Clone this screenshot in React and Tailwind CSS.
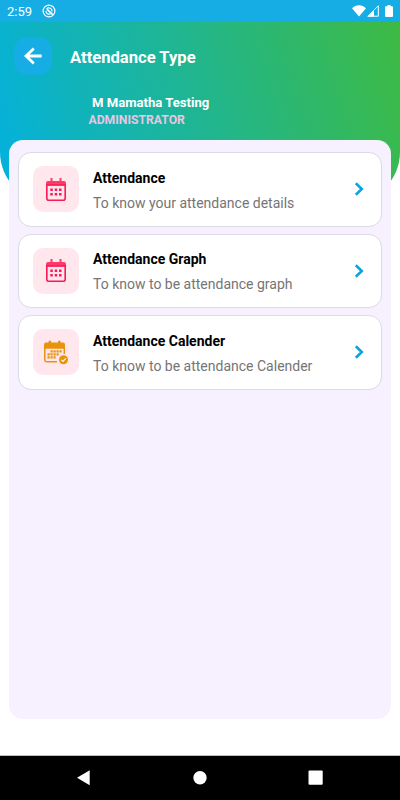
import React from "react";

const items = [
  { title: "Attendance", desc: "To know your attendance details", icon: CalendarIcon },
  { title: "Attendance Graph", desc: "To know to be attendance graph", icon: CalendarIcon },
  { title: "Attendance Calender", desc: "To know to be attendance Calender", icon: CalendarCheckIcon },
];

export default function App() {
  return (
    <div className="flex h-[800px] w-[400px] flex-col overflow-hidden bg-white font-['Roboto',sans-serif]">
      <StatusBar />

      <main className="relative flex-1">
        <header className="h-[180px] rounded-b-[50px] bg-[linear-gradient(73deg,#02b1e0_0%,#3eba42_100%)]">
          <div className="flex items-center pt-[15px] pl-[14px]">
            <button className="flex h-[38px] w-[38px] items-center justify-center rounded-[13px] bg-[#15ade3]">
              <BackIcon />
            </button>
            <h1 className="ml-[18px] pt-[3px] text-[16.6px] leading-[20px] font-bold text-white">Attendance Type</h1>
          </div>
          <div className="mt-[20px] pl-[88.5px]">
            <p className="pl-[3.5px] text-[13.1px] leading-[16px] font-bold text-white">M Mamatha Testing</p>
            <p className="mt-px text-[12.2px] leading-[16px] font-bold text-[#eac5e2]">ADMINISTRATOR</p>
          </div>
        </header>

        <section className="relative mx-[9px] -mt-[62px] flex h-[579px] flex-col gap-[7px] rounded-[14px] bg-[#f7f1ff] px-[9px] pt-[12px]">
          {items.map((item) => (
            <MenuCard key={item.title} {...item} />
          ))}
        </section>
      </main>

      <NavBar />
    </div>
  );
}

function MenuCard({ title, desc, icon: Icon }) {
  return (
    <div className="flex h-[74.5px] items-center rounded-[13px] border border-[#dcdae2] bg-white pr-[16px] pl-[14px]">
      <div className="flex h-[46px] w-[46px] items-center justify-center rounded-[10px] bg-[#ffe7ed]">
        <Icon />
      </div>
      <div className="ml-[14px] flex-1 pt-[2px] whitespace-nowrap">
        <h2 className="text-[14px] leading-[18px] font-bold text-black">{title}</h2>
        <p className="mt-[7px] text-[14px] leading-[18px] text-[#757575]">{desc}</p>
      </div>
      <svg width="12" height="16" viewBox="0 0 12 16" fill="none">
        <path d="M2.8 2.2 8.800 8l-6 5.800" stroke="#0aa5df" strokeWidth="2.6" />
      </svg>
    </div>
  );
}

function StatusBar() {
  return (
    <div className="flex h-[22px] items-center bg-[#15ade3] pr-[7px] pl-[7px] text-white">
      <span className="pt-px text-[13px] leading-[21px]">2:59</span>
      <svg className="ml-[10px]" width="14" height="14" viewBox="0 0 14 14" fill="none" stroke="currentColor">
        <circle cx="7" cy="7" r="5.9" strokeWidth="1.2" />
        <path d="M4.600 4.800a3.200 3.200 0 0 1 5.400 2.700M3.900 7a3.200 3.200 0 0 0 4.500 2.900" strokeWidth="1.200" />
        <path d="m4.800 5.200 6 5.500" strokeWidth="1.600" />
      </svg>
      <div className="ml-auto flex items-center">
        <svg width="14" height="12" viewBox="0 0 14 12" fill="currentColor">
          <path d="M0 3.2C3.8-.7 10.200-.7 14 3.200L7 11.600Z" />
        </svg>
        <svg className="ml-px" width="12" height="12" viewBox="0 0 12 12" fill="none">
          <path d="M.8 11.200H11.300V.8Z" stroke="currentColor" strokeWidth="1" />
          <path d="M.5 11.500 7 5v6.500Z" fill="currentColor" />
        </svg>
        <svg className="ml-[6px]" width="8" height="12" viewBox="0 0 8 12" fill="currentColor">
          <path d="M2.500 0h3v1.200H7q1 0 1 1V11q0 1-1 1H1q-1 0-1-1V2.200q0-1 1-1h1.500Z" />
        </svg>
      </div>
    </div>
  );
}

function NavBar() {
  return (
    <nav className="h-[45px] border-t border-[#bdbdbd] bg-black">
      <svg width="400" height="44" viewBox="0 0 400 44" fill="white">
        <path d="M77 21.700 89.700 14.200v15.100Z" />
        <circle cx="200" cy="21.700" r="6.700" />
        <rect x="308.500" y="14.500" width="14.200" height="14.200" rx="1" />
      </svg>
    </nav>
  );
}

function BackIcon() {
  return (
    <svg width="20" height="20" viewBox="0 0 20 20" fill="none" stroke="white" strokeWidth="2.800">
      <path d="M10.800 2.500 3 10l7.800 7.500M3 10h15.700" />
    </svg>
  );
}

function CalendarIcon() {
  return (
    <svg width="20" height="23" viewBox="0 0 20 23">
      <path d="M0 5q0-2 2-2h16q2 0 2 2v2.500H0Z" fill="#fd3a69" />
      <path d="M4.500 0h2v3h-2ZM13.500 0h2v3h-2Z" fill="#fd3a69" />
      <path d="M.8 7v13.200q0 2 2 2h14.400q2 0 2-2V7Z" fill="none" stroke="#fb1854" strokeWidth="1.600" />
      <path d="M4.300 10.500h2.500V13H4.300ZM8.700 10.500h2.500V13H8.700ZM13 10.500h2.500V13H13ZM4.300 15h2.500v2.500H4.300ZM8.700 15h2.500v2.500H8.700ZM13 15h2.500v2.500H13Z" fill="#fb1854" />
    </svg>
  );
}

function CalendarCheckIcon() {
  return (
    <svg width="26" height="26" viewBox="0 0 26 26" fill="#e8930c">
      <path d="M1 5.500q0-2 2-2h17q2 0 2 2v4.300H1Z" />
      <path d="M5.500 2.500q1.300-2 2.600 0V4H5.500ZM15 2.500q1.300-2 2.600 0V4H15Z" />
      <path d="M1.800 8v13q0 1.700 1.700 1.700H14M21.300 8v7" fill="none" stroke="#e8930c" strokeWidth="1.500" />
      <path d="M7.500 11.300h2.200v2.200H7.500ZM10.500 11.300h2.200v2.200h-2.200ZM13.500 11.300h2.200v2.200h-2.200ZM16.500 11.300h2.200v2.200h-2.200ZM4.500 14.300h2.200v2.200H4.500ZM7.500 14.300h2.200v2.200H7.500ZM10.500 14.300h2.200v2.200h-2.200ZM13.500 14.300h2.200v2.200h-2.200ZM4.500 17.300h2.200v2.200H4.500ZM7.500 17.300h2.200v2.200H7.500ZM10.500 17.300h2.200v2.200h-2.200Z" />
      <circle cx="20.500" cy="20.800" r="5.600" fill="#ffe7ed" />
      <circle cx="20.500" cy="20.800" r="4.500" />
      <path d="m18.400 20.800 1.600 1.600 2.800-3" fill="none" stroke="white" strokeWidth="1.100" />
    </svg>
  );
}
